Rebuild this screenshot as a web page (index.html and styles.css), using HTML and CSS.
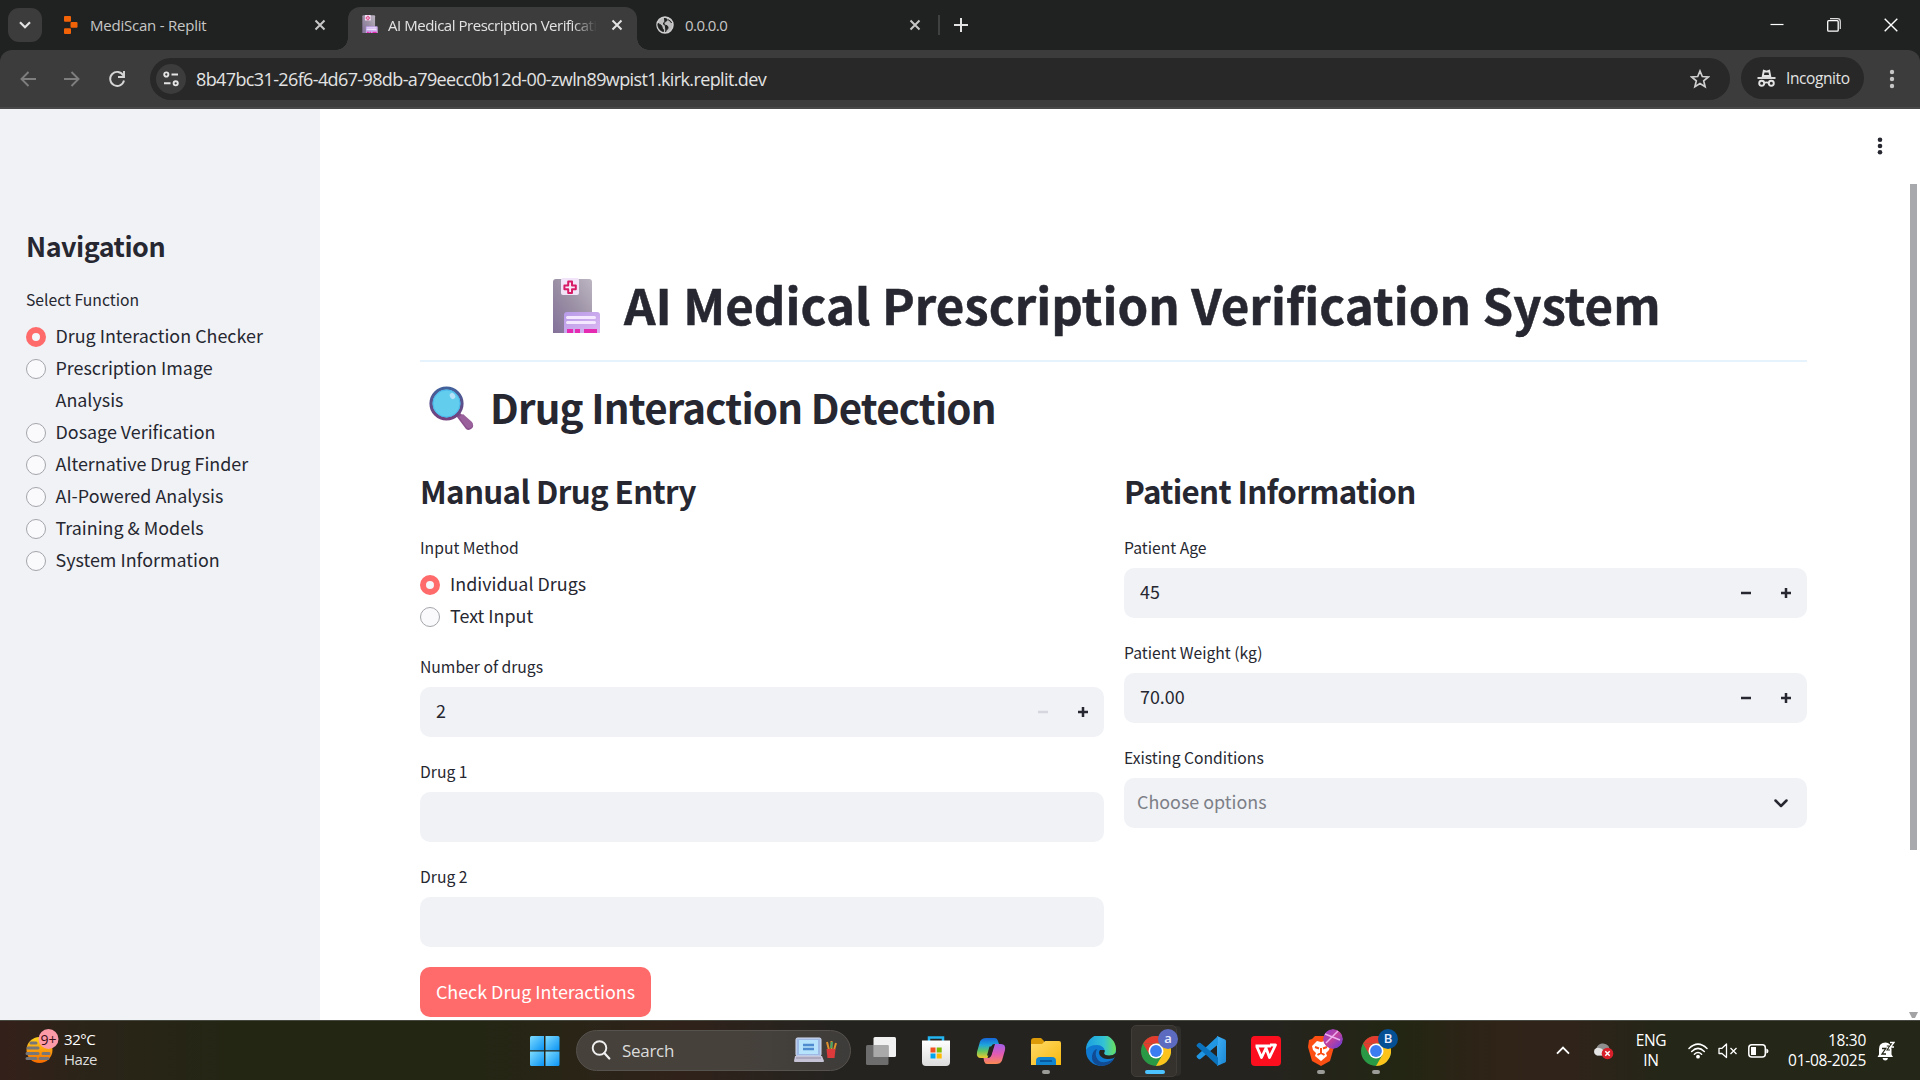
FILE: index.html
```html
<!DOCTYPE html>
<html lang="en">
<head>
<meta charset="utf-8">
<title>AI Medical Prescription Verification System</title>
<link rel="stylesheet" href="styles.css">
</head>
<body>
<svg class="defs" aria-hidden="true">
  <defs>
    <linearGradient id="hosp" x1="0" y1="1" x2="1" y2="0"><stop offset="0" stop-color="#83709a"/><stop offset=".5" stop-color="#9a8fa4"/><stop offset="1" stop-color="#bdb6c2"/></linearGradient>
    <linearGradient id="annex" x1="0" y1="0" x2="1" y2="1"><stop offset="0" stop-color="#b79be8"/><stop offset="1" stop-color="#dcb8f2"/></linearGradient>
    <linearGradient id="rim" x1="0" y1="0" x2="0" y2="1"><stop offset="0" stop-color="#42619b"/><stop offset="1" stop-color="#74417e"/></linearGradient>
    <linearGradient id="win" x1="0" y1="0" x2="1" y2="1"><stop offset="0" stop-color="#7fdcff"/><stop offset="1" stop-color="#0a93f5"/></linearGradient>
    <linearGradient id="fold" x1="0" y1="0" x2="1" y2="1"><stop offset="0" stop-color="#ffd968"/><stop offset="1" stop-color="#f8b90e"/></linearGradient>
    <linearGradient id="edgeTop" x1="0" y1="0" x2="1" y2="0"><stop offset="0" stop-color="#1b9de2"/><stop offset=".6" stop-color="#33c3d5"/><stop offset="1" stop-color="#6be05a"/></linearGradient>
    <linearGradient id="cop1" x1="0" y1="0" x2="0" y2="1"><stop offset="0" stop-color="#1665d8"/><stop offset=".35" stop-color="#1fa5dd"/><stop offset=".65" stop-color="#5fc463"/><stop offset="1" stop-color="#f1c92b"/></linearGradient>
    <linearGradient id="cop2" x1="0" y1="0" x2="0" y2="1"><stop offset="0" stop-color="#a060e8"/><stop offset=".5" stop-color="#e25bb4"/><stop offset="1" stop-color="#fb8a52"/></linearGradient>
    <linearGradient id="sun" x1="0" y1="0" x2="0" y2="1"><stop offset="0" stop-color="#ffd21a"/><stop offset="1" stop-color="#f56a00"/></linearGradient>
    <linearGradient id="code" x1="0" y1="0" x2="1" y2="1"><stop offset="0" stop-color="#3fb0f6"/><stop offset="1" stop-color="#1b86d4"/></linearGradient>
    <linearGradient id="prof" x1="0" y1="0" x2="1" y2="1"><stop offset="0" stop-color="#8b3fd0"/><stop offset=".5" stop-color="#c2439d"/><stop offset="1" stop-color="#5b3be0"/></linearGradient>
    <linearGradient id="paper" x1="0" y1="0" x2="0" y2="1"><stop offset="0" stop-color="#fff"/><stop offset="1" stop-color="#dcdcdc"/></linearGradient>
    <symbol id="hospital" viewBox="0 0 47 55">
      <path d="M0 55V4q0-3 3-3h33q3 0 3 3v51z" fill="url(#hosp)"/>
      <rect x="8" y="0" width="18" height="17" rx="2" fill="#f1e3f8"/>
      <path d="M15.2 3.6h3.8v3.8h3.8v3.8H19V15h-3.800v-3.800h-3.800V7.400h3.800z" fill="#f6e9fa" stroke="#d81b66" stroke-width="2" stroke-linejoin="round"/>
      <path d="M11 55V37q0-3 3-3h30q3 0 3 3v18z" fill="url(#annex)"/>
      <path d="M14.500 39.500h27M14.500 44.500h27" stroke="#f3e8ff" stroke-width="3" stroke-linecap="round"/>
      <path d="M14 51h6v4h-6zM22 51h5v4h-5zM31 51h13v4H31z" fill="#e42bb2"/>
    </symbol>
    <symbol id="chrome" viewBox="0 0 30 30">
      <circle cx="15" cy="15" r="15" fill="#2a9946"/>
      <path d="M2 7.500A15 15 0 0 1 28 7.500H15z" fill="#e33b2e"/>
      <path d="M2 7.500L8.500 18.700 15 15V7.500z" fill="#e33b2e"/>
      <path d="M28 7.500A15 15 0 0 1 15 30L21.500 18.700 15 7.500z" fill="#fcc31c"/>
      <circle cx="15" cy="15" r="7.500" fill="#fff"/><circle cx="15" cy="15" r="5.900" fill="#3a7df0"/>
    </symbol>
    <symbol id="x" viewBox="0 0 12 12"><path d="M1.500 1.500l9 9M10.500 1.500l-9 9" stroke="currentColor" stroke-width="2" fill="none"/></symbol>
    <symbol id="plus" viewBox="0 0 12 12"><path d="M1 6h10M6 1v10" stroke="currentColor" stroke-width="2.500"/></symbol>
    <symbol id="minus" viewBox="0 0 12 12"><path d="M1 6h10" stroke="currentColor" stroke-width="2.500"/></symbol>
  </defs>
</svg>

<header class="browser">
  <div class="tabstrip">
    <button class="tab-search"><svg width="12" height="8" viewBox="0 0 12 8"><path d="M1 1.200l5 5 5-5" fill="none" stroke="#e3e3e3" stroke-width="2.200"/></svg></button>
    <div class="tab tab-first">
      <svg class="fav" width="14" height="18" viewBox="0 0 14 18"><g fill="#f26207"><rect x="0" y="0" width="7" height="5.700" rx="1"/><rect x="6.500" y="6.100" width="7" height="5.700" rx="1"/><rect x="0" y="12.200" width="7" height="5.700" rx="1"/></g></svg>
      <span class="tab-title t1">MediScan - Replit</span>
      <svg class="close" width="12" height="12"><use href="#x"/></svg>
    </div>
    <div class="tab tab-active">
      <svg class="fav" width="16" height="18"><use href="#hospital"/></svg>
      <span class="tab-title t2">AI Medical Prescription Verification System</span>
      <svg class="close" width="12" height="12"><use href="#x"/></svg>
    </div>
    <div class="tab tab-last">
      <svg class="fav" width="18" height="18" viewBox="0 0 18 18"><circle cx="9" cy="9" r="8" fill="#bdbdbd" stroke="#cfcfcf" stroke-width="1.500"/><path d="M8 2.500c3 0 4 1 2.500 2.500S7 6 7.500 8s4 .5 4.500 3-2 2.500-2.500 5M2 7.500c2 1 4 1.500 4 3.500s2 2 1.500 4.500C4 15 1.500 11 2 7.500zM12 3.500c1 1.500 3 1 3.500 3.500" fill="#202121" stroke="#202121" stroke-width="1"/></svg>
      <span class="tab-title t3">0.0.0.0</span>
      <svg class="close" width="12" height="12"><use href="#x"/></svg>
    </div>
    <i class="tab-divider"></i>
    <svg class="newtab" width="14" height="14" viewBox="0 0 14 14"><path d="M0 7h14M7 0v14" stroke="#e3e3e3" stroke-width="2"/></svg>
    <div class="window-controls">
      <svg width="14" height="14" viewBox="0 0 14 14"><path d="M0.500 6.500h13" stroke="#fff" stroke-width="1.200"/></svg>
      <svg width="14" height="14" viewBox="0 0 14 14"><path d="M3 .7h7.500q2.800 0 2.800 2.800V11" fill="none" stroke="#ddd" stroke-width="1.200"/><rect x=".7" y="2.700" width="10.500" height="10.500" rx="1" fill="none" stroke="#fff" stroke-width="1.300"/></svg>
      <svg width="14" height="14" viewBox="0 0 14 14"><path d="M.7.7l12.600 12.600M13.300.7L.7 13.300" stroke="#fff" stroke-width="1.400"/></svg>
    </div>
  </div>
  <div class="toolbar">
    <svg class="nav-btn" width="16" height="16" viewBox="0 0 16 16"><path d="M16 8H2M8.500 1L1.500 8l7 7" fill="none" stroke="#7e7e7e" stroke-width="1.900"/></svg>
    <svg class="nav-btn" width="16" height="16" viewBox="0 0 16 16"><path d="M0 8h14M7.500 1l7 7-7 7" fill="none" stroke="#7e7e7e" stroke-width="1.900"/></svg>
    <svg class="nav-btn" width="18" height="18" viewBox="0 0 18 18"><path d="M15.300 5.500A7 7 0 1 0 16 10.500" fill="none" stroke="#d6d6d6" stroke-width="1.900"/><path d="M16 1v6h-6" fill="none" stroke="#d6d6d6" stroke-width="1.900"/></svg>
    <div class="omnibox">
      <span class="site-info"><svg width="16" height="16" viewBox="0 0 16 16"><g fill="none" stroke="#e3e3e3" stroke-width="1.900"><circle cx="3.300" cy="3.500" r="2.100"/><path d="M8.500 3.500H15M1 12.300h6.500"/><circle cx="12.700" cy="12.300" r="2.100"/></g></svg></span>
      <span class="url">8b47bc31-26f6-4d67-98db-a79eecc0b12d-00-zwln89wpist1.kirk.replit.dev</span>
      <svg class="star" width="20" height="20" viewBox="0 0 20 20"><path d="M10 2l2.300 5.500 6 .5-4.600 3.900 1.400 5.800L10 14.600l-5.100 3.100 1.400-5.800L1.700 8l6-.5z" fill="none" stroke="#cfcfcf" stroke-width="1.700"/></svg>
    </div>
    <div class="incognito">
      <svg width="19" height="18" viewBox="0 0 19 18"><path d="M5.800 7l1-5.200 2.700.8 2.700-.8 1 5.200z" fill="none" stroke="#e3e3e3" stroke-width="1.900"/><path d="M.5 9h18" stroke="#e3e3e3" stroke-width="1.900"/><g fill="none" stroke="#e3e3e3" stroke-width="1.900"><circle cx="4.700" cy="14.200" r="2.500"/><circle cx="14.300" cy="14.200" r="2.500"/><path d="M7 14q2.500-1.300 5 0"/></g></svg>
      <span>Incognito</span>
    </div>
    <svg class="menu" width="6" height="20" viewBox="0 0 6 20"><g fill="#c7c7c7"><circle cx="3" cy="3" r="2.200"/><circle cx="3" cy="10" r="2.200"/><circle cx="3" cy="17" r="2.200"/></g></svg>
  </div>
</header>

<div class="app">
  <aside class="sidebar">
    <h2 class="side-title">Navigation</h2>
    <p class="label">Select Function</p>
    <div class="radios">
      <label class="radio"><i class="dot on"></i><span>Drug Interaction Checker</span></label>
      <label class="radio"><i class="dot"></i><span>Prescription Image Analysis</span></label>
      <label class="radio"><i class="dot"></i><span>Dosage Verification</span></label>
      <label class="radio"><i class="dot"></i><span>Alternative Drug Finder</span></label>
      <label class="radio"><i class="dot"></i><span>AI-Powered Analysis</span></label>
      <label class="radio"><i class="dot"></i><span>Training &amp; Models</span></label>
      <label class="radio"><i class="dot"></i><span>System Information</span></label>
    </div>
  </aside>
  <main class="main">
    <div class="title-row">
      <svg width="47" height="55"><use href="#hospital"/></svg>
      <h1>AI Medical Prescription Verification System</h1>
    </div>
    <div class="section-row">
      <svg width="45" height="45" viewBox="0 0 45 45"><path d="M28 28l3-1 12 10q2.500 3-.3 5.500T37 43L28 31z" fill="#8a4f8c"/><path d="M30 31l4-3 9 8q2 3-.3 5-3 2.500-5.500 0z" fill="#99609b"/><circle cx="17.500" cy="17.500" r="15.500" fill="#62cdec" stroke="url(#rim)" stroke-width="3.200"/><circle cx="17.500" cy="17.500" r="13.500" fill="none" stroke="#4bb8ee" stroke-width="1"/><ellipse cx="23.500" cy="10" rx="2.500" ry="3.200" fill="#b5e2f8" transform="rotate(-35 23.500 10)"/></svg>
      <h2>Drug Interaction Detection</h2>
    </div>
    <div class="columns">
      <section class="col">
        <h3>Manual Drug Entry</h3>
        <p class="label">Input Method</p>
        <div class="radios">
          <label class="radio"><i class="dot on"></i><span>Individual Drugs</span></label>
          <label class="radio"><i class="dot"></i><span>Text Input</span></label>
        </div>
        <div class="field after-radios">
          <p class="label">Number of drugs</p>
          <div class="input"><span>2</span><svg class="step off" width="12" height="12"><use href="#minus"/></svg><svg class="step" width="12" height="12"><use href="#plus"/></svg></div>
        </div>
        <div class="field"><p class="label">Drug 1</p><div class="input"></div></div>
        <div class="field"><p class="label">Drug 2</p><div class="input"></div></div>
        <button class="primary">Check Drug Interactions</button>
      </section>
      <section class="col">
        <h3>Patient Information</h3>
        <div class="field">
          <p class="label">Patient Age</p>
          <div class="input"><span>45</span><svg class="step" width="12" height="12"><use href="#minus"/></svg><svg class="step" width="12" height="12"><use href="#plus"/></svg></div>
        </div>
        <div class="field">
          <p class="label">Patient Weight (kg)</p>
          <div class="input"><span>70.00</span><svg class="step" width="12" height="12"><use href="#minus"/></svg><svg class="step" width="12" height="12"><use href="#plus"/></svg></div>
        </div>
        <div class="field">
          <p class="label">Existing Conditions</p>
          <div class="input select"><span>Choose options</span><svg width="14" height="9" viewBox="0 0 14 9"><path d="M1.500 1.500L7 7l5.500-5.500" fill="none" stroke="#262730" stroke-width="2.500" stroke-linecap="round" stroke-linejoin="round"/></svg></div>
        </div>
      </section>
    </div>
    <svg class="kebab" width="6" height="18" viewBox="0 0 6 18"><g fill="#262730"><circle cx="3" cy="2.700" r="2.300"/><circle cx="3" cy="9" r="2.300"/><circle cx="3" cy="15.300" r="2.300"/></g></svg>
    <i class="scroll-thumb"></i>
    <svg class="scroll-down" width="9" height="6" viewBox="0 0 9 6"><path d="M0 0h9L6 6H3z" fill="#a3a3a5"/></svg>
  </main>
</div>

<footer class="taskbar">
  <div class="weather">
    <svg width="35" height="36" viewBox="0 0 35 36"><circle cx="14.500" cy="21" r="13" fill="url(#sun)"/><g stroke="#77777a" stroke-width="3" stroke-linecap="round"><path d="M6 14h5M3 19h10M2 24.500h11M18 24.500h6M2 29.500h9M15 29.500h8"/></g><circle cx="23.500" cy="10" r="10" fill="#fc9aa8"/><text x="23.500" y="15.500" text-anchor="middle" class="badge-count">9+</text></svg>
    <p><span>32°C</span><br><span class="cond">Haze</span></p>
  </div>
  <svg class="start" width="30" height="30" viewBox="0 0 30 30"><g fill="url(#win)"><path d="M1.500 0H14v14.200H0V1.500Q0 0 1.500 0z"/><path d="M15.500 0H28q1.500 0 1.500 1.500v12.700h-14z"/><path d="M0 15.500h14V30H1.500Q0 30 0 28.500z"/><path d="M15.500 15.500h14v13q0 1.500-1.500 1.500H15.500z"/></g></svg>
  <div class="search">
    <svg width="20" height="20" viewBox="0 0 20 20"><circle cx="8.500" cy="8" r="6.800" fill="none" stroke="#f0f0f0" stroke-width="1.900"/><path d="M13.300 13l5 5.500" stroke="#f0f0f0" stroke-width="2.200" stroke-linecap="round"/></svg>
    <span>Search</span>
    <svg class="art" width="43" height="26" viewBox="0 0 43 26"><rect x="2" y="1" width="25" height="18" rx="1.500" fill="#9db9e4" stroke="#d9def0"/><rect x="5" y="3" width="19" height="14" fill="#b6e2fb"/><path d="M9 8h11M9 12h11" stroke="#4f8ccf" stroke-width="2.500"/><path d="M1 19h27l2 5q0 1-1 1H1q-1 0-1-1z" fill="#c6c3d6"/><path d="M2 21h25" stroke="#8f8ca6"/><path d="M35 13l-2-8M37.500 13V4M40 13l2-7" stroke="#e0902c" stroke-width="2"/><path d="M37 11l1-6" stroke="#48a868" stroke-width="2"/><path d="M32.500 12h9l-1 9h-7z" fill="#dd3b3b"/></svg>
  </div>
  <nav class="apps">
    <div class="slot"><svg width="30" height="28" viewBox="0 0 30 28"><rect x="7.500" y="0" width="22.500" height="20" rx="1.500" fill="#f1f1f1"/><rect x="0" y="8" width="22.500" height="20" rx="1.500" fill="#777" opacity=".88"/><path d="M7.500 8h15v12h-15z" fill="#a9a9a9"/></svg></div>
    <div class="slot"><svg width="30" height="30" viewBox="0 0 30 30"><path d="M8 6V1.500h14V6" fill="none" stroke="#23b5f0" stroke-width="2.500"/><path d="M1 4.500h28V26q0 4-4 4H5q-4 0-4-4z" fill="url(#paper)"/><path d="M9.500 11.500h5v5h-5z" fill="#f25022"/><path d="M15.700 11.500h5v5h-5z" fill="#7fba00"/><path d="M9.500 17.500h5v5h-5z" fill="#00a4ef"/><path d="M15.700 17.500h5v5h-5z" fill="#ffb900"/></svg></div>
    <div class="slot"><svg width="30" height="28" viewBox="0 0 30 28"><path d="M10 1h9q2 0 2.800 2.500L23 7h-5q-2 0-3 3l-3.500 11H5q-5 0-4-6L4 4.500Q5.500 1 10 1z" fill="url(#cop1)"/><path d="M20 27h-9q-2 0-2.800-2.500L7.500 21H12q2.500 0 3.500-3L19 7h6q5 0 4 6l-3 10.500Q24.500 27 20 27z" fill="url(#cop2)"/><path d="M13.500 9.500h4L15 18.500h-4z" fill="#26241e"/></svg></div>
    <div class="slot run"><svg width="30" height="30" viewBox="0 0 30 30"><path d="M0 5q0-3 3-3h7l3 3v6H0z" fill="#dc9a08"/><path d="M0 8h11l3-3h14q2 0 2 2v22H0z" fill="url(#fold)"/><path d="M5 29v-4q0-4 4-4h12q4 0 4 4v4z" fill="#1184cf"/><path d="M9 25h12" stroke="#07569a" stroke-width="1.800"/></svg></div>
    <div class="slot"><svg width="30" height="30" viewBox="0 0 30 30"><circle cx="15" cy="15" r="15" fill="#0f78d0"/><path d="M0 14A15 15 0 0 1 30 13q0 7-7 7-6 0-5-3c2-3-1-8-7-8Q3 9 0 14z" fill="url(#edgeTop)"/><path d="M11 13q-3 6 1 11t16-1Q24 30 15 30 5 28 6 20q1-6 5-7z" fill="#114b93"/><path d="M14 14q-2 3 .5 6 3 3.500 8 3t6-1.500l2-2v-3q-3 3-7.500 3t-5-2.500q1-1 .5-3z" fill="#26241e"/></svg></div>
    <div class="slot current"><svg width="30" height="30"><use href="#chrome"/></svg><b class="avatar a">a</b></div>
    <div class="slot"><svg width="30" height="30" viewBox="0 0 30 30"><path d="M21 0l8 3.500q1 .5 1 1.500v20q0 1-1 1.500L21 30z" fill="url(#code)"/><path d="M22 0L1 19.500q-1 1 0 2l1.500 1.500q1 .7 2 0L22 8.500z" fill="#2196e3"/><path d="M22 30L1 10.500q-1-1 0-2L2.500 7q1-.7 2 0L22 21.500z" fill="#0b72bd"/></svg></div>
    <div class="slot"><svg width="30" height="30" viewBox="0 0 30 30"><rect width="30" height="30" rx="4" fill="#fb0f1e"/><path d="M4.500 10h15.500M6 11l4.500 10.500L15 12l3.500 9.500L24.500 9H19" fill="none" stroke="#fff" stroke-width="2.800" stroke-linejoin="round"/></svg></div>
    <div class="slot run"><svg width="30" height="30" viewBox="0 0 30 30"><path d="M9 0h12l3 3 3 1 1 7-4 14-9 5-9-5L2 11l1-7 3-1z" fill="#fb4f14"/><path d="M15 6l4-1 5 5-1 4-3 3 1 3-6 5-6-5 1-3-3-3-1-4 5-5z" fill="#fff"/><path d="M9 11l4 1.500M21 11l-4 1.500M15 12v5M11.500 19l3.500-2 3.500 2" stroke="#fb4f14" stroke-width="2" fill="none"/></svg><svg class="avatar" width="20" height="20" viewBox="0 0 20 20"><circle cx="10" cy="10" r="10" fill="url(#prof)"/><path d="M2 5l15 6M3 14L15 2" stroke="#eeb0ee" stroke-width="1.500"/></svg></div>
    <div class="slot run"><svg width="30" height="30"><use href="#chrome"/></svg><b class="avatar b">B</b></div>
  </nav>
  <div class="tray">
    <svg class="up" width="14" height="9" viewBox="0 0 14 9"><path d="M1 7.700L7 1.700l6 6" fill="none" stroke="#fff" stroke-width="1.900"/></svg>
    <svg class="cloud" width="21" height="18" viewBox="0 0 21 18"><path d="M4 13.500a4 4 0 0 1-.5-7.500 7 7 0 0 1 12-2l2 5.500-5 4z" fill="#8e8e8e"/><path d="M4 13.500A4 4 0 0 1 3.500 6q4-1 8 3l-1 4.500z" fill="#e4e4e4"/><circle cx="14.500" cy="11.500" r="5.800" fill="#d8202b"/><path d="M12.300 9.300l4.400 4.400M16.700 9.300l-4.400 4.400" stroke="#fff" stroke-width="1.500"/></svg>
    <p class="lang">ENG<br>IN</p>
    <svg class="wifi" width="20" height="16" viewBox="0 0 20 16"><g fill="none" stroke="#fff" stroke-width="1.500" stroke-linecap="round"><path d="M1 5.500Q10-3.300 19 5.500M3.700 8.500q6.300-6.200 12.600 0M6.400 11.300q3.600-3.500 7.200 0"/></g><circle cx="10" cy="13.700" r="1.900" fill="#fff"/></svg>
    <svg class="vol" width="20" height="16" viewBox="0 0 20 16"><path d="M1 5.300h3L8.500 1v13.500L4 10.500H1z" fill="none" stroke="#fff" stroke-width="1.300" stroke-linejoin="round"/><path d="M12.500 5l6 6M18.500 5l-6 6" stroke="#fff" stroke-width="1.300"/></svg>
    <svg class="bat" width="21" height="14" viewBox="0 0 21 14"><rect x=".8" y=".8" width="16.500" height="12.200" rx="3" fill="none" stroke="#fff" stroke-width="1.500"/><path d="M3 3h5v8H3z" fill="#fff"/><path d="M18.300 4.500q2.200.5 2.200 2.500t-2.200 2.500z" fill="#fff"/></svg>
    <p class="clock">18:30<br>01-08-2025</p>
    <svg class="bell" width="18" height="20" viewBox="0 0 18 20"><path d="M2 13.500V8q0-6.500 6.500-6.500 5.500 0 6 6.500v5.500L16 16H.5z" fill="#fff"/><path d="M5.500 17h5.500q-.5 2.500-2.700 2.500T5.500 17z" fill="#fff"/><path d="M5 7.500h3.800L5 13h4" fill="none" stroke="#242617" stroke-width="1.300"/><path d="M9.800 5h3L10 9h3" fill="none" stroke="#242617" stroke-width="1.100"/><path d="M11.500 0H18v7h-3.500z" fill="#242617"/><path d="M13 1.500h4L13.500 6H17" fill="none" stroke="#fff" stroke-width="1.400"/></svg>
  </div>
</footer>
</body>
</html>
```
FILE: styles.css
```css
* { box-sizing: border-box; }
body { margin: 0; width: 1920px; height: 1080px; overflow: hidden; display: flex; flex-direction: column; background: #fff; font-family: "Open Sans", sans-serif; }
h1, h2, h3, p { margin: 0; }
button { border: 0; padding: 0; font: inherit; }
svg { display: block; flex: none; }
.defs { position: absolute; width: 0; height: 0; }

/* browser chrome */
.browser { flex: none; height: 109px; background: #202221; color: #e3e3e3; display: flex; flex-direction: column; }
.tabstrip { height: 50px; display: flex; align-items: center; }
.tab-search { width: 34px; height: 34px; margin-left: 8px; border-radius: 11px; background: #3c3c3c; display: flex; align-items: center; justify-content: center; }
.tab { display: flex; align-items: center; font-size: 15px; white-space: nowrap; height: 50px; color: #c7c7c7; }
.fav { margin-top: -1px; }
.tab-title { overflow: hidden; flex: none; }
.tab-first { width: 306px; padding-left: 22px; }
.t1 { width: 224px; margin-left: 12px; letter-spacing: -.22px; }
.tab-active { width: 289px; height: 43px; align-self: flex-end; padding: 0 0 8px 14px; background: #3c3c3c; border-radius: 12px 12px 0 0; color: #e3e3e3; position: relative; }
.tab-active::before, .tab-active::after { content: ""; position: absolute; bottom: 0; width: 12px; height: 12px; }
.tab-active::before { left: -12px; background: radial-gradient(circle at 0 0, transparent 11.500px, #3c3c3c 12px); }
.tab-active::after { right: -12px; background: radial-gradient(circle at 100% 0, transparent 11.500px, #3c3c3c 12px); }
.t2 { width: 209px; margin: 0 14px 0 10px; letter-spacing: -.47px; -webkit-mask-image: linear-gradient(90deg, #000 88%, transparent); mask-image: linear-gradient(90deg, #000 88%, transparent); }
.tab-last { width: 300px; padding-left: 19px; }
.t3 { width: 214px; margin: 0 10px 0 11px; letter-spacing: -.55px; }
.tab-divider { width: 2px; height: 20px; margin-left: 1px; background: #3f4040; }
.newtab { margin-left: 14px; }
.window-controls { margin-left: auto; margin-right: 22px; display: flex; gap: 43px; }
.toolbar { height: 59px; background: #3c3c3c; border-radius: 12px 12px 0 0; border-bottom: 2px solid #484848; display: flex; align-items: center; padding-left: 20px; }
.nav-btn { margin-right: 28px; }
.nav-btn + .nav-btn + .nav-btn { margin-right: 24px; }
.omnibox { width: 1580px; height: 42px; border-radius: 21px; background: #282828; display: flex; align-items: center; padding: 0 20px 0 6px; }
.site-info { width: 30px; height: 30px; border-radius: 50%; background: #3c3c3c; display: flex; align-items: center; justify-content: center; }
.url { margin-left: 10px; font-size: 18px; letter-spacing: -.62px; white-space: nowrap; }
.star { margin-left: auto; }
.incognito { width: 123px; height: 42px; margin: -2px 0 0 11px; border-radius: 21px; background: #282828; display: flex; align-items: center; padding-left: 16px; gap: 10px; font-size: 15.500px; letter-spacing: -.4px; }
.menu { margin-left: 25px; }

/* application */
.app { height: 911px; display: flex; font-family: "Noto Sans CJK JP", "Noto Sans", sans-serif; color: #262730; }
.sidebar { width: 320px; background: #f0f2f6; padding: 119px 26px 0; }
.side-title { font-size: 26.900px; line-height: 36px; font-weight: 600; letter-spacing: -.5px; }
.label { font-size: 15.700px; line-height: 24px; }
.sidebar .label { margin: 24px 0 9px; }
.radio { display: flex; font-size: 17.900px; line-height: 32px; }
.radio span { margin: -2px 0 2px 10px; }
.sidebar .radio span { margin-left: 9.500px; max-width: 220px; }
.dot { flex: none; width: 20px; height: 20px; margin-top: 6px; border-radius: 50%; background: #fafafc; border: 1px solid #a3a5aa; }
.dot.on { background: #f5f6f9; border: 6px solid #ff6b6b; }
.main { flex: 1; position: relative; padding: 0 113px 0 100px; }
.title-row { height: 253px; padding-top: 162px; border-bottom: 2px solid #e6f3fd; display: flex; align-items: flex-start; padding-left: 133px; white-space: nowrap; }
.title-row svg { margin-top: 7px; }
.title-row h1 { margin-left: 24px; font-size: 49.200px; line-height: 66px; font-weight: 700; letter-spacing: .07px; -webkit-text-stroke: .5px #262730; }
.section-row { height: 90px; padding: 18px 0 0 9px; display: flex; align-items: flex-start; }
.section-row svg { margin-top: 6px; }
.section-row h2 { margin-left: 16px; font-size: 40.300px; line-height: 54px; font-weight: 600; letter-spacing: -.8px; }
.columns { display: grid; grid-template-columns: 684px 683px; gap: 20px; padding-top: 18px; }
.col h3 { font-size: 31.300px; line-height: 42px; font-weight: 600; margin-bottom: 24px; letter-spacing: -.65px; }
.col .radios { margin-top: 9px; }
.field { margin-bottom: 23px; }
.after-radios { margin-top: 22px; }
.field .label { margin-bottom: 8px; }
.input { height: 50px; border-radius: 10px; background: #f0f2f6; padding: 0 15px 0 16px; display: flex; align-items: center; font-size: 17.900px; line-height: 32px; }
.input span { flex: 1; margin-top: -4px; }
.step { margin-left: 28px; }
.step.off { color: #d5d7de; }
.select { padding: 0 19px 0 13px; color: #7d7f87; }
.primary { width: 231px; height: 50px; margin-top: -3px; padding-bottom: 3px; border-radius: 10px; background: #ff6b6b; color: #fff; font-size: 17.900px; display: block; }
.kebab { position: absolute; left: 1557px; top: 28px; }
.scroll-thumb { position: absolute; right: 3px; top: 75px; width: 7px; height: 666px; background: #a8a9ad; }
.scroll-down { position: absolute; right: 2px; bottom: 2px; }

/* taskbar */
.taskbar { flex: none; height: 60px; border-top: 1px solid #45493f; display: flex; align-items: center; color: #fff; background: linear-gradient(90deg, #34201a 0, #2a2418 90px, #242614 230px, #242614 480px, #30221a 680px, #252320 830px, #25231f 1260px, #232613 1400px, #302318 1500px, #30231a 1570px, #242617 1660px, #242617 100%); }
.weather { width: 505px; padding-left: 25px; display: flex; gap: 4px; font-size: 15px; line-height: 20px; letter-spacing: -.45px; margin-top: -4px; }
.badge-count { font-size: 14px; letter-spacing: 0; fill: #3a0e16; }
.cond { color: #ddd; }
.start { margin-left: 25px; }
.search { width: 275px; height: 41px; margin: -1px 0 0 16px; border: 1px solid #56524d; border-radius: 21px; background: linear-gradient(90deg, #46413b, #46413b 60%, #3e3c3a); display: flex; align-items: center; padding: 0 13px 0 14px; color: #dcdcdc; font-size: 17px; letter-spacing: -.3px; }
.search span { margin-left: 11px; }
.art { margin-left: auto; }
.apps { display: flex; margin-left: 2px; }
.slot { width: 55px; height: 59px; display: flex; align-items: center; justify-content: center; position: relative; }
.run::after, .current::after { content: ""; position: absolute; left: 24px; bottom: 6px; width: 8px; height: 4px; border-radius: 2px; background: #9b9b97; }
.current::after { left: 17px; width: 20px; background: #4cc2ff; }
.current::before { content: ""; position: absolute; left: 3px; top: 4px; width: 44px; height: 50px; border-radius: 5px; background: #35322d; border: 1px solid #403d38; box-shadow: 5px 0 0 -1px #302e2a; }
.slot svg { position: relative; }
.slot .avatar { position: absolute; left: 30px; top: 8px; width: 20px; height: 20px; border-radius: 50%; color: #e8ecff; font: 600 13px/19px "Open Sans", sans-serif; text-align: center; }
.a { background: #5c6bc0; }
.b { background: #054f95; }
.tray { flex: 1; display: flex; align-items: center; justify-content: flex-end; padding-right: 25px; font-size: 15.500px; line-height: 20px; letter-spacing: -.3px; }
.tray p { margin-top: -2px; }
.cloud { margin-left: 23px; }
.lang { width: 32px; margin-left: 21px; text-align: center; }
.wifi { margin-left: 21px; }
.vol { margin-left: 10px; }
.bat { margin-left: 10px; }
.clock { width: 90px; margin-left: 7px; text-align: right; white-space: nowrap; }
.bell { margin-left: 11px; }
```
